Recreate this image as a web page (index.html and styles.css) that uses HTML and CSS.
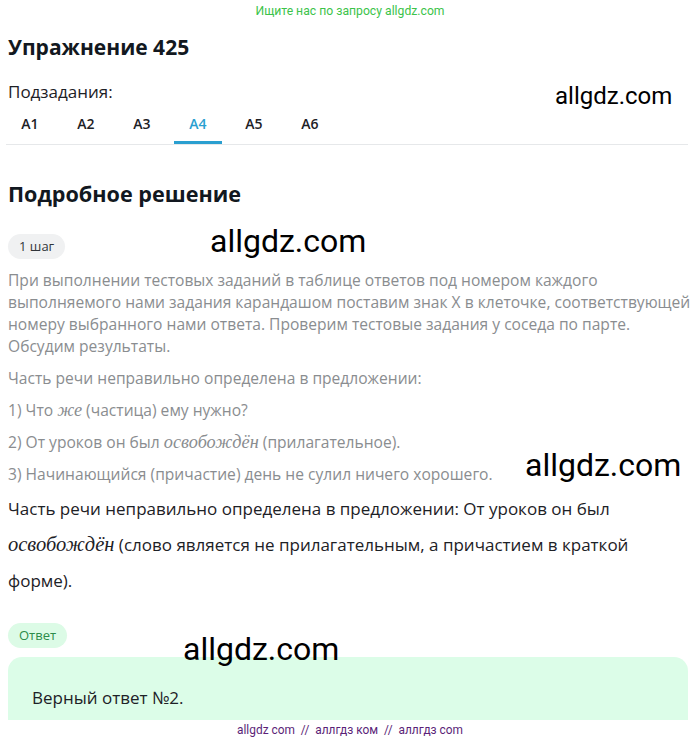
FILE: index.html
```html
<!DOCTYPE html>
<html lang="ru">
<head>
<meta charset="utf-8">
<link rel="stylesheet" href="styles.css">
</head>
<body>
<div class="top">Ищите нас по запросу allgdz.com</div>
<main class="page">
  <h1 class="title">Упражнение 425</h1>
  <div class="sub-label">Подзадания:</div>
  <nav class="tabs">
    <span class="tab">А1</span>
    <span class="tab">А2</span>
    <span class="tab">А3</span>
    <span class="tab active">А4</span>
    <span class="tab">А5</span>
    <span class="tab">А6</span>
  </nav>
  <h2 class="title sol">Подробное решение</h2>
  <div class="step-row">
    <span class="pill">1 шаг</span>
  </div>
  <div class="gray">
    <p class="para">При выполнении тестовых заданий в таблице ответов под номером каждого выполняемого нами задания карандашом поставим знак Х в клеточке, соответствующей номеру выбранного нами ответа. Проверим тестовые задания у соседа по парте. Обсудим результаты.</p>
    <p class="para">Часть речи неправильно определена в предложении:</p>
    <p class="para">1) Что <i class="it">же</i> (частица) ему нужно?</p>
    <p class="para">2) От уроков он был <i class="it">освобождён</i> (прилагательное).</p>
    <p class="para">3) Начинающийся (причастие) день не сулил ничего хорошего.</p>
  </div>
  <p class="dark">Часть речи неправильно определена в предложении: От уроков он был <i class="it">освобождён</i> (слово является не прилагательным, а причастием в краткой форме).</p>
  <div class="answer-row">
    <span class="pill green">Ответ</span>
  </div>
  <div class="answer-box">Верный ответ №2.</div>
</main>
<div class="footer">allgdz com &nbsp;//&nbsp; аллгдз ком &nbsp;//&nbsp; аллгдз com</div>
<div class="wm wm1">allgdz.com</div>
<div class="wm wm2">allgdz.com</div>
<div class="wm wm3">allgdz.com</div>
<div class="wm wm4">allgdz.com</div>
</body>
</html>
```
FILE: styles.css
```css
* { box-sizing: border-box; }
html, body { margin: 0; padding: 0; background: #fff; }
body { font-family: "Open Sans", "Noto Sans", sans-serif; color: #1d2126; width: 700px; height: 744px; overflow: hidden; position: relative; }
.top { text-align: center; color: #3cc34a; font-size: 12.2px; height: 22px; line-height: 22px; font-family: Roboto, sans-serif; }
.page { padding: 0 12px 0 8px; }
.title { font-size: 21px; font-weight: 700; margin: 0; line-height: 30px; padding-top: 10px; color: #121820; }
.sub-label { font-size: 17px; margin-top: 20px; line-height: 20px; }
.tabs { display: flex; gap: 8px; margin-top: 2px; border-bottom: 1px solid #e6e8ea; margin-left: -2px; }
.tab { width: 48px; text-align: center; font-size: 14px; font-weight: 600; line-height: 40px; height: 40px; border-bottom: 3px solid transparent; color: #1d2126; }
.tab.active { color: #2a9fd0; border-bottom-color: #2a9fd0; }
.sol { margin-top: 34px; padding-top: 0; font-size: 21.6px; }
.step-row { margin-top: 25px; height: 25px; }
.pill { display: inline-block; height: 25px; line-height: 25px; padding: 0 11px; border-radius: 13px; background: #f0f1f2; font-size: 13px; color: #30353a; }
.gray { color: #8a8d90; font-size: 15.6px; margin-top: 10px; margin-right: -10px; }
.para { margin: 0 0 10px; line-height: 22px; }
.it { font-family: "Liberation Serif", serif; font-size: 18.3px; line-height: 1; }
.dark { margin: -4px 0 0; font-size: 17px; line-height: 36px; color: #1d2126; }
.dark .it { font-size: 20.5px; }
.answer-row { margin-top: 24px; height: 25px; }
.pill.green { background: #dcfbe6; color: #2d8c4a; font-size: 13px; }
.answer-box { margin-top: 9px; background: #dcfde8; border-radius: 14px 14px 0 0; height: 63px; padding: 29px 24px 0; font-size: 17px; color: #1d2126; }
.footer { text-align: center; color: #5b1f78; font-size: 11.9px; line-height: 20px; font-family: Roboto, sans-serif; }
.wm { position: absolute; font-family: Roboto, sans-serif; color: #000; white-space: nowrap; font-weight: 400; }
.wm1 { left: 555px; top: 82px; font-size: 24px; }
.wm2 { left: 210px; top: 222px; font-size: 32px; }
.wm3 { left: 525px; top: 446px; font-size: 32px; }
.wm4 { left: 183px; top: 630px; font-size: 32px; }
```
